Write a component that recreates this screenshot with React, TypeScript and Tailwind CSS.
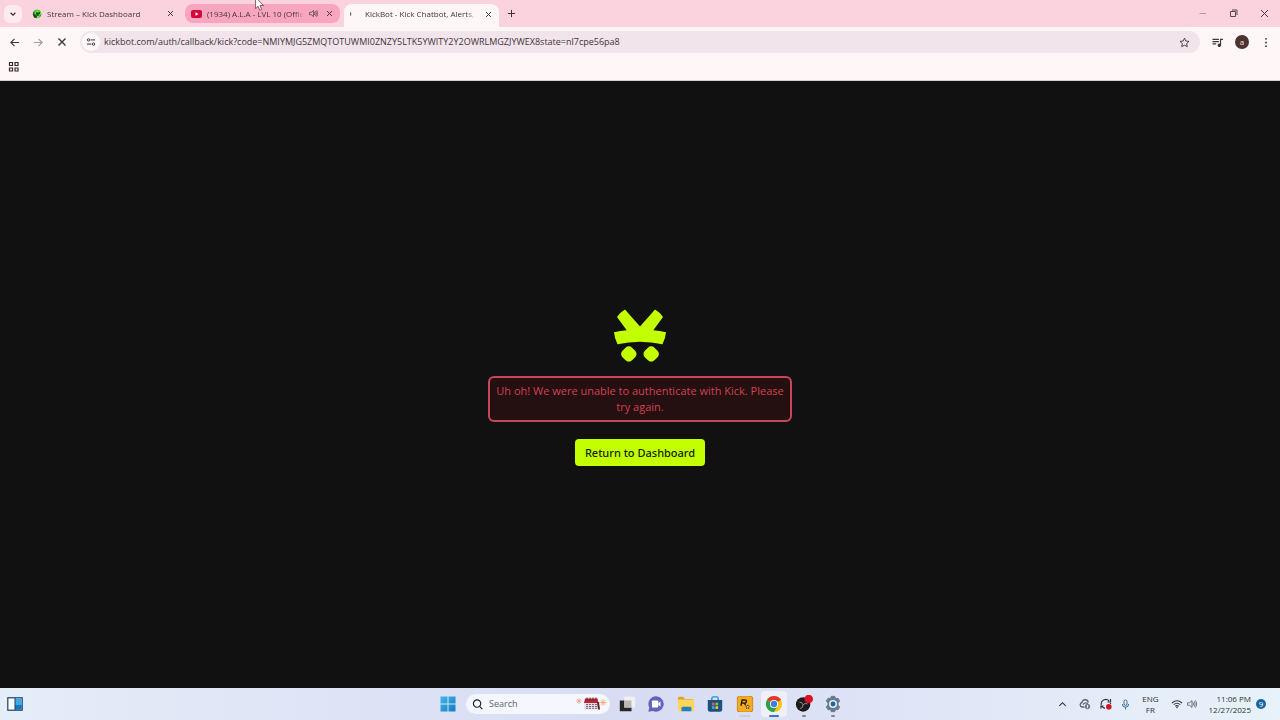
import React from "react";

type IconProps = { className?: string };

type TabProps = {
  title: string;
  icon: React.ReactNode;
  className: string;
  muted?: boolean;
};

const CloseIcon = ({ className }: IconProps) => (
  <svg viewBox="0 0 10 10" className={className} fill="none" stroke="currentColor" strokeWidth="1.4">
    <path d="M1.5 1.5l7 7M8.5 1.5l-7 7" />
  </svg>
);

const SpeakerIcon = ({ className }: IconProps) => (
  <svg viewBox="0 0 16 16" className={className} fill="none" stroke="currentColor" strokeWidth="1.2" strokeLinejoin="round" strokeLinecap="round">
    <path d="M1.5 6h2.5l4-3.5v11L4 10H1.5z" />
    <path d="M10 6q1.3 2 0 4M12 4.3q2.6 3.7 0 7.4M14 2.7q3.2 5.3 0 10.6" />
  </svg>
);

const KickFavicon = () => (
  <svg viewBox="0 0 20 20" className="size-[10px] shrink-0">
    <circle cx="10" cy="10" r="8.5" fill="#22702c" />
    <path d="M5 4l5-3 7 3 2 7-4 3-4-3-6 2z" fill="#4fe02a" />
    <path d="M2 10l5 1 2 6-4 1z" fill="#2b3a2c" />
    <path d="M9 6l3 2 3-3 1 4-4 3-4-1z" fill="#123c18" />
    <path d="M11 14l5 0-3 4-4 0z" fill="#7fee51" />
  </svg>
);

const YoutubeFavicon = () => (
  <svg viewBox="0 0 22 16" className="h-2 w-[11px] shrink-0">
    <rect width="22" height="16" rx="4" fill="#d3083a" />
    <path d="M9 4.5v7l6-3.5z" fill="#fff" />
  </svg>
);

const LoadingFavicon = () => (
  <svg viewBox="0 0 10 10" className="size-[10px] shrink-0">
    <path d="M0 3.5q1.5 1.2 0 3.2" stroke="#7c6670" strokeWidth="1.2" fill="none" />
  </svg>
);

const Tab = ({ title, icon, className, muted }: TabProps) => (
  <div className={`flex w-[155px] items-center gap-[5px] pr-[7px] pl-[6px] text-[#43343b] ${className}`}>
    {icon}
    <span className="min-w-0 flex-1 overflow-hidden text-[8px] leading-4 whitespace-nowrap mask-r-from-90%">
      {title}
    </span>
    {muted && (
      <button aria-label="Mute tab">
        <SpeakerIcon className="size-[9px]" />
      </button>
    )}
    <button aria-label="Close tab" className="ml-[3px]">
      <CloseIcon className="size-[7px]" />
    </button>
  </div>
);

const TabStrip = () => (
  <div className="flex h-[27px] items-center bg-[#fbd3df] pl-1 text-[#3d3036]">
    <button aria-label="Search tabs" className="flex size-[18px] items-center justify-center rounded-md bg-[#fdebf0]">
      <svg viewBox="0 0 10 10" className="size-2" fill="none" stroke="currentColor" strokeWidth="1.6">
        <path d="M2 3.5l3 3 3-3" />
      </svg>
    </button>
    <div className="ml-1 flex h-full items-end gap-1">
      <Tab title="Stream – Kick Dashboard" icon={<KickFavicon />} className="h-[27px]" />
      <Tab
        title="(1934) A.L.A - LVL 10 (Offic"
        icon={<YoutubeFavicon />}
        muted
        className="mb-1 h-[19px] rounded-lg bg-[#f8a5c0]"
      />
      <Tab
        title="KickBot - Kick Chatbot, Alerts,"
        icon={<LoadingFavicon />}
        className="h-[23px] rounded-t-lg bg-[#fef6f7] pb-[3px]"
      />
    </div>
    <button aria-label="New tab" className="ml-2">
      <svg viewBox="0 0 10 10" className="size-[9px]" fill="none" stroke="currentColor" strokeWidth="1.1">
        <path d="M5 1v8M1 5h8" />
      </svg>
    </button>
    <div className="ml-auto flex items-center gap-[22px] pr-[11px]">
      <button aria-label="Minimize">
        <svg viewBox="0 0 9 9" className="size-[9px]" stroke="#b09aa3" strokeWidth="1">
          <path d="M1.5 4.5h6.5" />
        </svg>
      </button>
      <button aria-label="Restore">
        <svg viewBox="0 0 9 9" className="size-[9px]" fill="none" stroke="#5c464f" strokeWidth="1">
          <path d="M1.5 2.5h5v5h-5zM3 1h5v5" />
        </svg>
      </button>
      <button aria-label="Close window">
        <svg viewBox="0 0 9 9" className="size-[9px]" fill="none" stroke="#4d3942" strokeWidth="1">
          <path d="M1 1l7 7M8 1l-7 7" />
        </svg>
      </button>
    </div>
  </div>
);

const Toolbar = () => (
  <div className="flex h-[30px] items-center bg-[#fef6f7] pr-3 pl-[9px] text-[#43343b]">
    <div className="flex items-center gap-[13px]">
      <button aria-label="Back">
        <svg viewBox="0 0 12 12" className="size-[11px]" fill="none" stroke="currentColor" strokeWidth="1.2">
          <path d="M11 6H2M6 2L2 6l4 4" />
        </svg>
      </button>
      <button aria-label="Forward">
        <svg viewBox="0 0 12 12" className="size-[11px]" fill="none" stroke="#a8979e" strokeWidth="1.2">
          <path d="M1 6h9M6 2l4 4-4 4" />
        </svg>
      </button>
      <button aria-label="Stop loading">
        <CloseIcon className="size-[10px]" />
      </button>
    </div>
    <div className="ml-[13px] flex h-[22px] min-w-0 flex-1 items-center rounded-full bg-[#f1e4eb] pr-[10px] pl-[2px]">
      <button aria-label="Site information" className="flex size-[18px] shrink-0 items-center justify-center rounded-full bg-[#fef8fa]">
        <svg viewBox="0 0 12 12" className="size-[10px]" fill="none" stroke="currentColor" strokeWidth="1.2">
          <path d="M5.5 3.5H11M1 8.5h5.5" />
          <circle cx="3" cy="3.5" r="1.4" />
          <circle cx="9" cy="8.5" r="1.4" />
        </svg>
      </button>
      <input
        aria-label="Address"
        className="min-w-0 flex-1 bg-transparent px-1 text-[9px] leading-4 outline-none"
        defaultValue="kickbot.com/auth/callback/kick?code=NMIYMJG5ZMQTOTUWMI0ZNZY5LTK5YWITY2Y2OWRLMGZJYWEX8state=nl7cpe56pa8"
      />
      <button aria-label="Bookmark this tab">
        <svg viewBox="0 0 24 24" className="size-[11px]" fill="none" stroke="currentColor" strokeWidth="2">
          <path d="M12 2.5l2.9 6.3 6.9.8-5.1 4.7 1.4 6.8-6.1-3.4-6.1 3.4 1.4-6.8L2.2 9.6l6.9-.8z" />
        </svg>
      </button>
    </div>
    <div className="ml-3 flex items-center gap-3">
      <button aria-label="Media controls">
        <svg viewBox="0 0 12 12" className="size-[11px]" fill="none" stroke="currentColor" strokeWidth="1.3">
          <path d="M.5 2.5h7M.5 5h7M.5 7.5h4M9.3 9V2.5H12" />
          <circle cx="8" cy="9" r="1.3" fill="currentColor" />
        </svg>
      </button>
      <button aria-label="Profile" className="flex size-[14px] items-center justify-center rounded-full bg-[#4e3230] text-[8px] leading-none text-[#f5e6e4]">
        a
      </button>
      <button aria-label="Menu" className="ml-[3px]">
        <svg viewBox="0 0 4 12" className="h-[11px] w-1" fill="currentColor">
          <circle cx="2" cy="2" r="1" />
          <circle cx="2" cy="6" r="1" />
          <circle cx="2" cy="10" r="1" />
        </svg>
      </button>
    </div>
  </div>
);

const BookmarksBar = () => (
  <div className="flex h-6 items-center border-b border-[#d9cdd1] bg-[#fef6f7] pb-1 pl-2 text-[#332a2e]">
    <button aria-label="Apps">
      <svg viewBox="0 0 11 11" className="size-[11px]" fill="none" stroke="currentColor" strokeWidth="1.2">
        <path d="M1.5 1.5h3v3h-3zM7 1.5h3v3H7zM1.5 7h3v3h-3zM7 7h3v3H7z" />
      </svg>
    </button>
  </div>
);

const KickBotLogo = () => (
  <svg viewBox="0 0 52 53" className="h-[53px] w-[52px]" fill="#c3ff00" role="img" aria-label="KickBot">
    <path d="M11 .5L26 17.5 41 .5Q46 3.3 49 8L39.3 21.3Q45.5 21.8 52 23.3Q51.5 29.5 48.5 35.3Q37.5 32.7 26 32.7T3.5 35.3Q.5 29.5 0 23.3Q6.5 21.8 12.7 21.3L3 8Q6 3.3 11 .5z" />
    <rect x="8" y="38.2" width="13.6" height="13.6" rx="4.6" transform="rotate(45 14.8 45)" />
    <rect x="30.4" y="38.2" width="13.6" height="13.6" rx="4.6" transform="rotate(45 37.2 45)" />
  </svg>
);

const AuthError = () => (
  <main className="flex flex-1 flex-col items-center justify-center bg-[#111111] pt-[6px]">
    <KickBotLogo />
    <p role="alert" className="mt-[14px] w-[304px] rounded-md border-2 border-[#c8465c] bg-[#240f11] px-1 py-[5px] text-center text-[11px] leading-4 text-[#d3414f]">
      Uh oh! We were unable to authenticate with Kick. Please try again.
    </p>
    <a href="#dashboard" className="mt-[17px] rounded bg-[#c3ff00] px-[10px] py-[5px] font-['Noto_Sans',sans-serif] text-[11px] leading-[17px] font-medium text-[#12230a]">
      Return to Dashboard
    </a>
  </main>
);

const pinnedApps = [
  {
    name: "Task View",
    running: "",
    icon: (
      <>
        <rect x="7" y="2" width="12" height="12" rx="1" fill="#f2f1f1" />
        <path d="M2 6h5v8h8v4H2z" fill="#262626" />
        <path d="M7 6h8v8H7z" fill="#bdb9b7" />
      </>
    ),
  },
  {
    name: "Chat",
    running: "",
    icon: (
      <>
        <path d="M10 1.5a8.5 8.5 0 1 1-3.5 16.2L1.5 18.5l1-4.5A8.5 8.5 0 0 1 10 1.5z" fill="#6264b5" />
        <rect x="5.5" y="6" width="7" height="8" rx="1" fill="#fff" />
        <path d="M12.5 9.2L15 7v6l-2.5-2.2z" fill="#fff" />
      </>
    ),
  },
  {
    name: "File Explorer",
    running: "",
    icon: (
      <>
        <path d="M1 3.5q0-1.5 1.5-1.5H7l2 2.5h9V8H1z" fill="#dda52b" />
        <rect x="1" y="5" width="18" height="13" rx="1" fill="#fbd55c" />
        <path d="M5 18v-3.5Q5 13 6.5 13h8q1.5 0 1.5 1.5V18z" fill="#2581bd" />
      </>
    ),
  },
  {
    name: "Microsoft Store",
    running: "",
    icon: (
      <>
        <path d="M6.5 6V3.5Q6.5 2 8 2h4q1.5 0 1.5 1.5V6" fill="none" stroke="#2492c7" strokeWidth="1.5" />
        <path d="M2 5.5h16V16q0 2.5-2.5 2.5h-11Q2 18.5 2 16z" fill="#1c517f" />
        <path d="M6.5 8.5h3v3h-3z" fill="#ee5a3b" />
        <path d="M10.5 8.5h3v3h-3z" fill="#85c440" />
        <path d="M6.5 12.5h3v3h-3z" fill="#36a7e8" />
        <path d="M10.5 12.5h3v3h-3z" fill="#f6c433" />
      </>
    ),
  },
  {
    name: "Rockstar Games Launcher",
    running: "bg-[#cdd0dc] w-3",
    icon: (
      <>
        <rect x="1" y="1" width="18" height="18" rx="3" fill="#a36b10" />
        <rect x="1.5" y="1.5" width="17" height="17" rx="3" fill="#f4ad20" />
        <path d="M5.5 12L6.8 5.5h3q2.2 0 1.8 1.8-.4 1.5-2.1 1.7.9.5.7 2.5M6.2 9H9" fill="none" stroke="#211809" strokeWidth="1.5" />
        <path d="M13 11l.6 1.4 1.5.1-1.1 1 .3 1.5-1.3-.8-1.3.8.3-1.5-1.1-1 1.5-.1z" fill="#fff" stroke="#211809" strokeWidth=".7" />
      </>
    ),
  },
  {
    name: "Google Chrome",
    running: "bg-[#3c77b5] w-[10px]",
    icon: (
      <>
        <circle cx="10" cy="10" r="9" fill="#f8c51d" />
        <path d="M2.2 5.5A9 9 0 0 1 17.8 5.5L10 10z" fill="#de3b2d" />
        <path d="M2.2 5.5A9 9 0 0 0 10 19l3.9-6.8L10 10z" fill="#2da14e" />
        <circle cx="10" cy="10" r="4.5" fill="#fff" />
        <circle cx="10" cy="10" r="3.5" fill="#3b7de0" />
      </>
    ),
  },
  {
    name: "OBS Studio",
    running: "bg-[#7b8394] w-1",
    icon: (
      <>
        <circle cx="9" cy="10.5" r="8" fill="#1d1b1d" />
        <path d="M5 8q3-.5 4 3 2-3 5-1M9 11q0 3.5-3.5 4" fill="none" stroke="#a9a7a9" strokeWidth=".9" />
        <circle cx="15.2" cy="4.5" r="4.8" fill="#dc1127" />
      </>
    ),
  },
  {
    name: "Settings",
    running: "bg-[#7b8394] w-1",
    icon: (
      <>
        <path d="M8 1.5h4l.7 2.7 2.6-.8 2.2 3.3-1.9 2.1v2.4l1.9 2.1-2.2 3.3-2.6-.8-.7 2.7H8l-.7-2.7-2.6.8-2.2-3.3 1.9-2.1V8.8L2.5 6.7l2.2-3.3 2.6.8z" fill="#687b8e" stroke="#687b8e" strokeLinejoin="round" />
        <circle cx="10" cy="10" r="4.5" fill="#dce8f3" />
        <circle cx="10" cy="10" r="2.7" fill="#27639c" />
      </>
    ),
  },
];

const Taskbar = () => (
  <footer className="grid h-8 grid-cols-[1fr_auto_1fr] items-center bg-linear-to-r from-[#e4edf8] via-[#d8dcf3] to-[#e8f2fa] text-[#2b3038]">
    <button aria-label="Widgets" className="ml-[7px] w-4">
      <svg viewBox="0 0 16 14" className="h-[14px] w-4">
        <rect x=".8" y=".8" width="14.4" height="12.4" fill="#fff" stroke="#173d67" strokeWidth="1.2" />
        <path d="M8 1.3h6.7v11.4H8z" fill="#41a7e3" />
        <path d="M8 8h6.7v4.7H8z" fill="#1874bd" />
        <path d="M8 1v12" stroke="#173d67" />
      </svg>
    </button>
    <div className="flex h-full items-center pl-1">
      <button aria-label="Start" className="mr-2 flex w-5 justify-center">
        <svg viewBox="0 0 16 16" className="size-4">
          <defs>
            <linearGradient id="start" x1="0" y1="0" x2="1" y2="1">
              <stop offset="0" stopColor="#3fbbe8" />
              <stop offset="1" stopColor="#1278c4" />
            </linearGradient>
          </defs>
          <path d="M.5 .5h7v7h-7zM8.5 .5h7v7h-7zM.5 8.5h7v7h-7zM8.5 8.5h7v7h-7z" fill="url(#start)" />
        </svg>
      </button>
      <label className="mr-1 flex h-5 w-36 items-center rounded-full bg-[#f4f7fd] pr-[3px] pl-[6px]">
        <svg viewBox="0 0 12 12" className="size-[11px] shrink-0" fill="none" stroke="#1f2328" strokeWidth="1.3">
          <circle cx="5.5" cy="5" r="4" />
          <path d="M8.3 8L11.3 11" />
        </svg>
        <input aria-label="Search" placeholder="Search" className="ml-[6px] w-0 min-w-0 flex-1 bg-transparent text-[9px] leading-4 outline-none placeholder:text-[#62666d]" />
        <svg viewBox="0 0 32 14" className="h-[14px] w-8 shrink-0">
          <g stroke="#eda58f" strokeWidth=".8">
            <path d="M4 1v6M1 4h6M2 2l4 4M6 2L2 6" />
            <path d="M28 2v7M24.5 5.5h7M25.7 3.2l4.6 4.6M30.3 3.2l-4.6 4.6" stroke="#efa763" />
          </g>
          <path d="M10 2.5l13-.5 1.5 10.5H9z" fill="#e2dde2" />
          <path d="M10 1.5h12.5l.8 4.5H9z" fill="#bd2037" />
          <path d="M12 .5v3M15 .5v3M18 .5v3M21 .5v3" stroke="#4c3338" />
          <path d="M11 7.5h11M11 9.5h11.5M11 11.3h12" stroke="#776b78" strokeDasharray="2 1" />
          <path d="M22 5l2 0 1 7.5-2 0z" fill="#701d2b" />
        </svg>
      </label>
      <div className="flex h-full w-[232px] items-center justify-between">
        {pinnedApps.map((app) => (
          <button
            key={app.name}
            aria-label={app.name}
            className={`relative flex size-[26px] items-center justify-center rounded ${
              app.name === "Google Chrome" ? "bg-[#eef0fa]" : ""
            }`}
          >
            <svg viewBox="0 0 20 20" className="size-[18px]">
              {app.icon}
            </svg>
            {app.running && (
              <span className={`absolute bottom-0 left-1/2 h-[2px] -translate-x-1/2 rounded-full ${app.running}`} />
            )}
          </button>
        ))}
      </div>
    </div>
    <div className="flex items-center justify-end pr-[14px] text-[8px] leading-[11px]">
      <button aria-label="Show hidden icons" className="mr-3">
        <svg viewBox="0 0 10 10" className="size-[9px]" fill="none" stroke="currentColor" strokeWidth="1.2">
          <path d="M1.5 6.5L5 3l3.5 3.5" />
        </svg>
      </button>
      <svg viewBox="0 0 12 12" className="mr-[9px] size-3" fill="none" stroke="#5f666f" strokeWidth="1.3">
        <path d="M5.5 9H3a2.3 2.3 0 0 1 0-4.5A3.2 3.2 0 0 1 9.3 4.3M4 6.5q2-2.5 5-1" />
        <circle cx="8.5" cy="8.5" r="2.7" fill="#7b8087" stroke="none" />
        <path d="M8.5 7v3" stroke="#fff" strokeWidth=".8" />
      </svg>
      <svg viewBox="0 0 12 12" className="mr-[9px] size-3" fill="none" stroke="#31363c" strokeWidth="1.2">
        <path d="M1.3 7A4.5 4.5 0 0 1 9 3M10.5 1v3h-3M5 10.3A4.5 4.5 0 0 1 1.8 8M1 10.5V8h2.5M10.5 5v1" />
        <circle cx="8.8" cy="8.7" r="2.8" fill="#d0122c" stroke="none" />
      </svg>
      <svg viewBox="0 0 10 12" className="mr-3 h-[11px] w-[9px]" fill="none" stroke="#39698f" strokeWidth="1.1">
        <rect x="3.3" y="1" width="3.4" height="6" rx="1.7" />
        <path d="M1.5 5.5q0 3.5 3.5 3.5t3.5-3.5M5 9v2.5" />
      </svg>
      <button className="mr-3 text-center">
        ENG
        <br />
        FR
      </button>
      <svg viewBox="0 0 12 10" className="mr-1 h-[10px] w-3" fill="none" stroke="#363c44" strokeWidth="1.1">
        <path d="M1 4q5-4.5 10 0M2.7 5.7q3.3-2.8 6.6 0M4.3 7.3q1.7-1.3 3.4 0" />
        <circle cx="6" cy="8.5" r=".8" fill="#363c44" stroke="none" />
      </svg>
      <SpeakerIcon className="mr-3 size-[10px] text-[#4a5058]" />
      <div className="mr-[5px] text-right">
        <p>11:06 PM</p>
        <p>12/27/2025</p>
      </div>
      <span className="flex size-[10px] items-center justify-center rounded-full bg-[#17659f] text-[8px] leading-[10px] text-white">9</span>
    </div>
  </footer>
);

const App = () => (
  <div className="relative flex min-h-screen flex-col bg-[#111111] font-['Open_Sans','Noto_Sans',sans-serif]">
    <header>
      <TabStrip />
      <Toolbar />
      <BookmarksBar />
    </header>
    <AuthError />
    <Taskbar />
    {/* mouse pointer */}
    <svg viewBox="0 0 12 18" className="pointer-events-none absolute top-[-4px] left-[255px] h-4 w-[10px]">
      <path d="M.7 1v13.5l3-2.8 2 4.8 2.3-1-2-4.7h4.3z" fill="#fff" stroke="#4d3c43" strokeWidth=".9" />
    </svg>
  </div>
);

export default App;
